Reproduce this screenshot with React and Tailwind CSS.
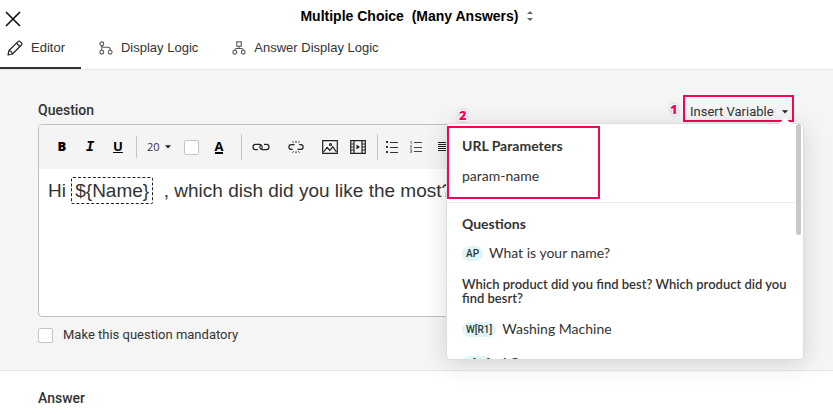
import { useState } from 'react';

const TABS = [
  { id: 'editor', label: 'Editor', icon: PencilIcon },
  { id: 'display', label: 'Display Logic', icon: BranchIcon },
  { id: 'answer', label: 'Answer Display Logic', icon: TreeIcon },
];

function CloseIcon() {
  return (
    <svg width="16" height="16" viewBox="0 0 16 16" fill="none" stroke="#111" strokeWidth="1.6">
      <path d="M1 1l14 14M15 1L1 15" />
    </svg>
  );
}

function SortIcon() {
  return (
    <svg width="6" height="10" viewBox="0 0 6 10" fill="#666">
      <path d="M0 3L3 0l3 3zM0 7h6L3 10z" />
    </svg>
  );
}

function PencilIcon() {
  return (
    <svg width="16" height="16" viewBox="0 0 16 16" fill="none" stroke="#222" strokeWidth="1.2" strokeLinejoin="round">
      <path d="M1 15l1-4.5L11 1.6q1-1 2.1 0l1.3 1.3q1 1 0 2.1L5.5 14z" />
      <path d="M9.5 3.1l3.4 3.4M2 10.5q2.8.4 3.5 3.5" />
    </svg>
  );
}

function BranchIcon() {
  return (
    <svg width="14" height="14" viewBox="0 0 14 14" fill="none" stroke="#555" strokeWidth="1.1">
      <circle cx="2.8" cy="2.8" r="1.9" />
      <circle cx="2.8" cy="11.2" r="1.9" />
      <circle cx="11.2" cy="11.2" r="1.9" />
      <path d="M2.8 4.7v4.6M2.8 4.7q.3 1.5 1.900 1.500h4q2.500 0 2.500 2.300v.8" />
    </svg>
  );
}

function TreeIcon() {
  return (
    <svg width="14" height="14" viewBox="0 0 14 14" fill="none" stroke="#555" strokeWidth="1.1">
      <rect x="4.8" y=".8" width="4.4" height="4.4" />
      <circle cx="2.8" cy="11.2" r="1.9" />
      <circle cx="11.2" cy="11.2" r="1.9" />
      <path d="M7 5.200v2.300M2.800 9.300q0-1.800 1.800-1.800h4.800q1.800 0 1.800 1.800" />
    </svg>
  );
}

function Caret() {
  return (
    <svg width="6" height="4" viewBox="0 0 6 4" fill="#222">
      <path d="M0 .3h6L3 3.500z" />
    </svg>
  );
}

function LinkIcon() {
  return (
    <svg width="18" height="8" viewBox="0 0 18 8" fill="none" stroke="#222" strokeWidth="1.2" strokeLinecap="round">
      <path d="M5.500 6.600H3.600a2.600 2.600 0 010-5.200h4a2.600 2.600 0 012.200 4" />
      <path d="M12.500 1.400h1.900a2.600 2.600 0 010 5.200h-4a2.600 2.600 0 01-2.200-4" />
    </svg>
  );
}

function UnlinkIcon() {
  return (
    <svg width="16" height="14" viewBox="0 0 16 14" fill="none" stroke="#222" strokeWidth="1.2">
      <path d="M6.500 4.600H3.300a2.400 2.400 0 000 4.800h1.500M9.500 9.400h3.200a2.400 2.400 0 000-4.800h-1.500" />
      <path d="M8 .8v2M4.500 1.300l1 1.500M11.500 1.300l-1 1.500M8 11.300v2M4.500 12.800l1-1.500M11.500 12.800l-1-1.500" strokeWidth="1" />
    </svg>
  );
}

function ImageIcon() {
  return (
    <svg width="16" height="14" viewBox="0 0 16 14" fill="none" stroke="#222" strokeWidth="1.2">
      <path d="M.7.7h14.600v12.600H.7z" />
      <path d="M1.500 12l3.600-4.600 2.700 3 3-3.600 3.700 5.200" />
      <circle cx="8.5" cy="4.5" r="1" />
    </svg>
  );
}

function FilmIcon() {
  return (
    <svg width="16" height="14" viewBox="0 0 16 14" fill="none" stroke="#222" strokeWidth="1.2">
      <path d="M.7.7h14.600v12.600H.7zM4 .7v12.600M12 .7v12.600M.7 4H4M.7 7H4M.7 10H4M12 4h3.300M12 7h3.300M12 10h3.300" />
      <path d="M6.500 4.500v5L10 7z" fill="#222" stroke="none" />
    </svg>
  );
}

function BulletsIcon() {
  return (
    <svg width="12" height="12" viewBox="0 0 12 12" fill="#333">
      <path d="M0 0h2v2H0zM0 5h2v2H0zM0 10h2v2H0zM4 1h8v1H4zM4 6h8v1H4zM4 11h8v1H4z" />
    </svg>
  );
}

function NumbersIcon() {
  return (
    <svg width="12" height="12" viewBox="0 0 12 12" fill="none" stroke="#666">
      <path d="M4 1.500h8M4 6.500h8M4 10.500h8" stroke="#444" />
      <path d="M.3.600h1v2.600M0 4.800h1.700L.4 7.200h1.600M0 8.800h1.700v2.600H0M.5 10.100h1.200" strokeWidth=".8" />
    </svg>
  );
}

function AlignIcon() {
  return (
    <svg width="12" height="10" viewBox="0 0 12 10" stroke="#222" strokeWidth="1.2">
      <path d="M0 .5h12M0 2.500h9M0 4.500h12M0 6.500h9M0 8.500h12" />
    </svg>
  );
}

function Tool({ label, className = 'w-7', children }) {
  return (
    <button type="button" aria-label={label} className={`flex h-7 shrink-0 items-center justify-center text-black ${className}`}>
      {children}
    </button>
  );
}

function Divider({ className }) {
  return <span className={`w-px shrink-0 bg-[#c4c4c4] ${className}`} />;
}

function MenuItem({ code, label }) {
  return (
    <button type="button" className="flex h-5 w-full items-center gap-1.5 text-left text-sm text-[#333]">
      <span className="rounded-full bg-[#dff6f7] px-1 font-['Roboto',sans-serif] text-[10px] leading-[15px] font-medium">{code}</span>
      {label}
    </button>
  );
}

function VariableMenu() {
  return (
    <div className="absolute top-full right-0 z-10 mt-px h-[237px] w-[358px] rounded-sm border border-[#ddd] bg-white font-['Lato',sans-serif] text-[#333] shadow-[0_4px_24px_rgba(0,0,0,0.14)]">
      <span className="absolute -top-1 right-3 size-3 rotate-45 bg-white" />
      <div className="relative h-full overflow-hidden">
        <section className="h-[79px] border-b border-[#ececec] px-[15px] pt-3">
          <h3 className="text-sm leading-5 font-bold">URL Parameters</h3>
          <button type="button" className="mt-2.5 block text-sm leading-5">param-name</button>
        </section>
        <section className="pt-[11px] pr-2.5 pl-[15px]">
          <h3 className="text-sm leading-5 font-bold">Questions</h3>
          <div className="mt-[9px]"><MenuItem code="AP" label="What is your name?" /></div>
          <h4 className="mt-3.5 mb-3.5 text-[13px] leading-[14px] font-semibold">
            Which product did you find best? Which product did you find besrt?
          </h4>
          <div className="space-y-3.5">
            <MenuItem code="W[R1]" label="Washing Machine" />
            <MenuItem code="A[R2]" label="AC" />
          </div>
        </section>
        <span className="absolute top-0 right-0.5 h-[111px] w-[5px] rounded-full bg-[#c8c8c8]" />
      </div>
      <Callout number="2" className="-top-[17px] left-3" />
      <span className="absolute top-0.5 left-0 h-[73px] w-[153px] border-2 border-[#f5055a]" />
    </div>
  );
}

function Callout({ number, className }) {
  return (
    <span className={`absolute font-['Open_Sans',sans-serif] text-[13px] leading-4 font-extrabold text-[#f5055a] [text-shadow:1px_0_#fff,-1px_0_#fff,0_1px_#fff,0_-1px_#fff,1px_1px_#fff,-1px_-1px_#fff,0_0_4px_#777] ${className}`}>
      {number}
    </span>
  );
}

export default function App() {
  const [tab, setTab] = useState('editor');
  const [menuOpen, setMenuOpen] = useState(true);
  const [mandatory, setMandatory] = useState(false);

  return (
    <div className="min-h-screen overflow-hidden bg-white font-['Roboto',sans-serif] text-[13px] text-[#333]">
      <header className="border-b border-[#e8e8e8]">
        <div className="grid h-8 grid-cols-[30px_1fr_30px]">
          <button type="button" aria-label="Close" className="pt-[5px] pl-[5px]"><CloseIcon /></button>
          <button type="button" className="flex items-center justify-center gap-2 justify-self-center font-['Liberation_Sans',sans-serif] text-sm font-bold whitespace-pre text-black">
            Multiple Choice  (Many Answers)
            <SortIcon />
          </button>
        </div>
        <nav className="flex h-[37px] font-['Liberation_Sans',sans-serif]">
          {TABS.map(({ id, label, icon: Icon }) => (
            <button
              key={id}
              type="button"
              onClick={() => setTab(id)}
              className={`flex items-center gap-2 border-b-2 pr-4 pb-1 ${id === 'editor' ? 'pl-[7px]' : 'pl-[18px]'} ${tab === id ? 'border-[#333]' : 'border-transparent'}`}
            >
              <Icon />
              {label}
            </button>
          ))}
        </nav>
      </header>

      <main>
        <section className="border-b border-[#e6e6e6] bg-[#f5f5f5] pt-[25px] pr-[29px] pb-[25px] pl-[38px]">
          <div className="flex h-[29px] items-start justify-between">
            <h2 className="pt-[5px] text-sm leading-5 font-medium">Question</h2>
            <div className="relative">
              <button
                type="button"
                aria-expanded={menuOpen}
                onClick={() => setMenuOpen(!menuOpen)}
                className="mr-2.5 flex h-[27px] w-[111px] items-center justify-between border-2 border-[#f5055a] pt-1.5 pr-1 pl-[5px]"
              >
                Insert Variable
                <Caret />
              </button>
              <Callout number="1" className="top-1.5 -left-[13px]" />
              {menuOpen && <VariableMenu />}
            </div>
          </div>

          <div className="overflow-hidden rounded-sm border border-[#c0c0c0] bg-white">
            <div className="flex h-11 items-center bg-[#f4f4f4] pl-[9px]">
              <Tool label="Bold"><b className="font-['Open_Sans',sans-serif] text-[13px] font-extrabold">B</b></Tool>
              <Tool label="Italic"><i className="font-['Liberation_Mono',monospace] text-sm font-bold">I</i></Tool>
              <Tool label="Underline"><u className="font-['Open_Sans',sans-serif] text-[13px] font-bold">U</u></Tool>
              <Divider className="mx-1 h-[22px]" />
              <button type="button" className="ml-1.5 flex w-6 items-center justify-between font-['Open_Sans',sans-serif] text-[11px]">
                20 <Caret />
              </button>
              <Tool label="Background colour" className="ml-1.5 w-7">
                <span className="size-[15px] rounded-xs border border-[#c4c4c4] bg-white" />
              </Tool>
              <Tool label="Text colour">
                <span className="border-b-2 border-black font-['Open_Sans',sans-serif] text-[13px] leading-3 font-bold">A</span>
              </Tool>
              <Divider className="ml-2 h-[26px]" />
              <Tool label="Insert link" className="w-[38px]"><LinkIcon /></Tool>
              <Tool label="Remove link" className="w-8"><UnlinkIcon /></Tool>
              <Tool label="Insert image" className="ml-0.5 w-8"><ImageIcon /></Tool>
              <Tool label="Insert video" className="w-6"><FilmIcon /></Tool>
              <Divider className="ml-[7px] h-[26px]" />
              <Tool label="Bulleted list"><BulletsIcon /></Tool>
              <Tool label="Numbered list" className="w-5"><NumbersIcon /></Tool>
              <Tool label="Align" className="w-9"><AlignIcon /></Tool>
            </div>
            <div
              role="textbox"
              aria-label="Question text"
              contentEditable
              suppressContentEditableWarning
              className="h-[147px] pt-2 pl-[9px] font-['Liberation_Sans',sans-serif] text-[19px] leading-7 whitespace-pre text-[#333] outline-none"
            >
              Hi <span className="inline-block rounded-xs border border-dashed border-[#222] px-[3px] leading-[25px]">{'${Name}'}</span>{'  , which dish did you like the most?'}
            </div>
          </div>

          <label className="mt-2 flex h-5 w-fit items-center gap-2.5">
            <input
              type="checkbox"
              checked={mandatory}
              onChange={(e) => setMandatory(e.target.checked)}
              className="size-[15px] appearance-none rounded-xs border border-[#c4c4c4] bg-white checked:bg-[#333]"
            />
            Make this question mandatory
          </label>
        </section>

        <section className="pt-[17px] pl-[38px]">
          <h2 className="text-sm leading-5 font-medium">Answer</h2>
        </section>
      </main>
    </div>
  );
}
